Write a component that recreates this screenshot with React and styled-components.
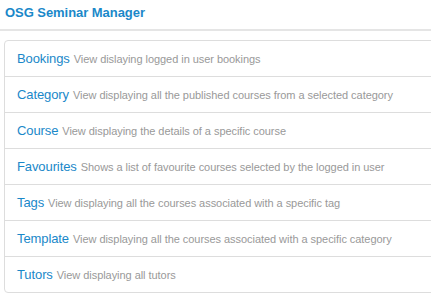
import React from "react";
import styled, { createGlobalStyle } from "styled-components";

const items = [
  { name: "Bookings", desc: "View dislaying logged in user bookings" },
  { name: "Category", desc: "View displaying all the published courses from a selected category" },
  { name: "Course", desc: "View displaying the details of a specific course" },
  { name: "Favourites", desc: "Shows a list of favourite courses selected by the logged in user" },
  { name: "Tags", desc: "View displaying all the courses associated with a specific tag" },
  { name: "Template", desc: "View displaying all the courses associated with a specific category" },
  { name: "Tutors", desc: "View displaying all tutors" },
];

function App() {
  return (
    <Page>
      <GlobalStyle />
      <Header>
        <Title>OSG Seminar Manager</Title>
      </Header>
      <List>
        {items.map((el) => (
          <Row key={el.name}>
            <Name>{el.name}</Name>
            <Desc>{el.desc}</Desc>
          </Row>
        ))}
      </List>
    </Page>
  );
}

export default App;

const GlobalStyle = createGlobalStyle`
  body {
    margin: 0;
    background: #ffffff;
    font-family: "Liberation Sans", Arial, sans-serif;
  }
`;

const Page = styled.div`
  width: 431px;
  height: 302px;
  overflow: hidden;
`;

const Header = styled.div`
  height: 24px;
  padding: 5px 5px 0;
  border-bottom: 2px solid #e5e5e5;
  margin-bottom: 9px;
`;

const Title = styled.div`
  font-size: 13px;
  line-height: 16px;
  font-weight: 700;
  color: #1a88c9;
  letter-spacing: -0.05px;
`;

const List = styled.div`
  margin-left: 4px;
  width: 440px;
  border: 1px solid #dddddd;
  border-radius: 4px;
`;

const Row = styled.div`
  height: 35px;
  display: flex;
  align-items: center;
  padding-left: 12px;
  white-space: nowrap;
  border-top: 1px solid #dddddd;

  &:first-child {
    border-top: none;
  }
`;

const Name = styled.span`
  font-size: 13px;
  color: #1a88c9;
  margin-right: 4px;
  letter-spacing: -0.1px;
`;

const Desc = styled.span`
  font-size: 11px;
  color: #999999;
  padding-top: 1px;
  letter-spacing: -0.05px;
`;
